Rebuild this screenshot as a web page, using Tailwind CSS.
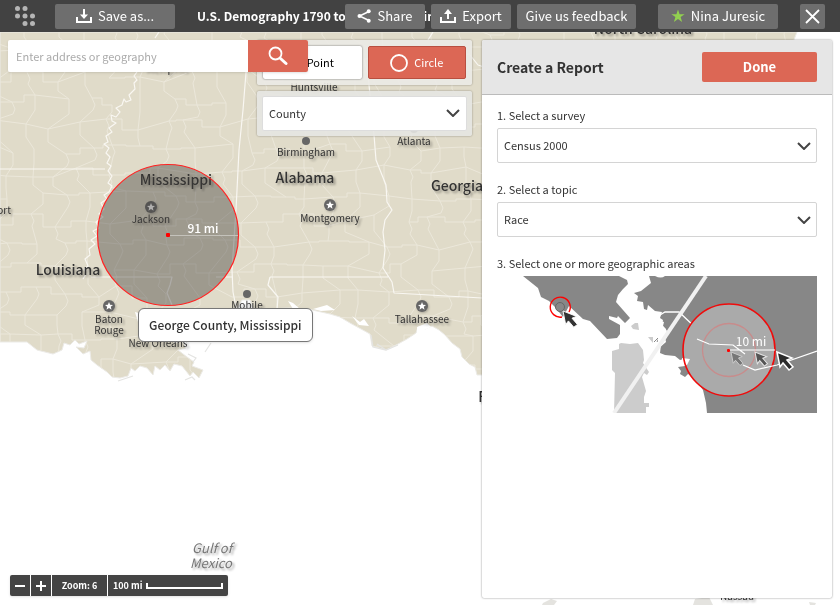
<!DOCTYPE html>
<html lang="en">
<head>
<meta charset="utf-8">
<title>U.S. Demography – Create a Report</title>
<script src="https://cdn.jsdelivr.net/npm/@tailwindcss/browser@4"></script>
</head>
<body class="flex min-h-screen flex-col bg-white font-['Noto_Sans_CJK_SC','Noto_Sans',sans-serif] text-[11px] text-[#333]">

<header class="relative z-20 flex h-8 items-center bg-[#424242] pr-[15px] pl-[15px] text-[13px] text-white">
  <button type="button" aria-label="Menu" class="w-5 shrink-0">
    <svg viewBox="0 0 20 20" class="h-5 w-5" fill="#b5b5b5"><circle cx="2.500" cy="2.500" r="2.500"/><circle cx="10" cy="2.500" r="2.500"/><circle cx="2.500" cy="10" r="2.500"/><circle cx="10" cy="10" r="2.500"/><circle cx="17.500" cy="10" r="2.500"/><circle cx="10" cy="17.500" r="2.500"/><circle cx="17.500" cy="17.500" r="2.500"/></svg>
  </button>
  <button type="button" class="ml-5 flex h-[25px] w-[120px] shrink-0 items-center justify-center gap-1.5 rounded-xs bg-[#6e6e6e]">
    <svg viewBox="0 0 16 15" class="h-[15px] w-4" fill="none" stroke="#fff" stroke-width="2"><path d="M1 8v5h14V8"/><path d="M8 0v8"/><path d="M4 5.500h8L8 10z" fill="#fff" stroke="none"/></svg>
    Save as...
  </button>
  <h1 class="ml-[22px] w-0 min-w-0 flex-1 text-[12px] font-bold whitespace-nowrap">U.S. Demography 1790 to Present – Main</h1>
  <nav class="relative flex shrink-0 items-center gap-1.5">
    <button type="button" class="flex h-[25px] w-20 items-center justify-center gap-1.5 rounded-xs bg-[#6e6e6e]">
      <svg viewBox="0 0 14 14" class="h-3.5 w-3.5" fill="#fff" stroke="#fff"><path d="M12 2.500 2.500 7 12 11.500" fill="none" stroke-width="1.500"/><circle cx="2.500" cy="7" r="2" stroke="none"/><circle cx="11.700" cy="2.300" r="2" stroke="none"/><circle cx="11.700" cy="11.700" r="2" stroke="none"/></svg>
      Share
    </button>
    <button type="button" class="flex h-[25px] w-20 items-center justify-center gap-1.5 rounded-xs bg-[#6e6e6e]">
      <svg viewBox="0 0 16 15" class="h-[15px] w-4 shrink-0" fill="none" stroke="#fff" stroke-width="2"><path d="M1 8v5h14V8"/><path d="M8 3v7"/><path d="M4 5h8L8 0z" fill="#fff" stroke="none"/></svg>
      Export
    </button>
    <button type="button" class="h-[25px] w-[119px] rounded-xs bg-[#6e6e6e] whitespace-nowrap">Give us feedback</button>
    <button type="button" class="ml-4 flex h-[25px] w-[120px] items-center justify-center gap-1.5 rounded-xs bg-[#6e6e6e] whitespace-nowrap">
      <svg viewBox="0 0 14 14" class="h-3.5 w-3.5" fill="#92d050"><path d="M7 .5 8.600 5.200h5L9.600 8.100l1.500 4.900L7 10.100 2.900 13l1.500-4.900L.4 5.200h5z"/></svg>
      Nina Juresic
    </button>
    <button type="button" aria-label="Close" class="ml-4 flex h-[25px] w-[25px] items-center justify-center rounded-xs bg-[#6e6e6e]">
      <svg viewBox="0 0 15 15" class="h-[15px] w-[15px]" stroke="#fff" stroke-width="1.800"><path d="m1 1 13 13M14 1 1 14"/></svg>
    </button>
  </nav>
</header>

<main class="relative flex flex-1 justify-end gap-2.5 overflow-hidden px-2 pt-2 pb-[7px]">

  <svg viewBox="0 32 840 573" preserveAspectRatio="xMinYMin slice" class="absolute inset-0 h-full w-full" role="img" aria-label="Map of the Gulf coast">
    <defs>
      <clipPath id="land"><path id="coast" d="M0 32H797L792 45H600V375H477L475 367 469 364 462 357 460 349 452 343 445 335 439 330 432 326 425 329 418 327 416 333 407 339 398 344 386 350 372 346 370 334 361 329 350 323 340 317 330 314 308 309 290 308 262 309 256 315 250 300 242 300 235 312 200 318 184 330 174 343 182 341 186 348 178 350 187 357 194 362 192 366 203 370 199 378 193 372 190 376 182 366 174 364 170 371 165 365 160 370 155 366 153 375 147 368 140 366 135 371 131 368 128 376 120 378 112 377 107 372 97 365 91 360 90 351 83 354 76 347 84 348 87 341 79 344 75 340 70 345 64 343 62 350 53 354 37 350 27 342H0Z"/></clipPath>
    </defs>
    <use href="#coast" fill="#e0dbc9" stroke="#ecebe7" stroke-width="1"/>
    <g clip-path="url(#land)" fill="none" stroke-linejoin="round">
      <path id="counties" stroke="#ebe7da" stroke-width="1"/>
      <g stroke="#f9f7f2" stroke-width="1.200">
        <path d="M247 60 243 110 239 150 236 210 232 270 233 292 237 312M216 277h17"/>
        <path d="M0 169h105M91 277h81l-2 8-3 8 5 12"/>
        <path d="M155 38l4-6M137 72l-3 4 3 4-3 3 1 6-6 6 2 5-5 2-2-3-2 6-6 3 4 4-4 5-5-2 1 6 4 2-7 5 3 4-6 4 2 6-4 2 5 4-3 5 4 4-3 6 4 3-3 5 4 5-4 7 4 3-3 6-5 3 3 4-6 4 3 6-5 5 4 3-7 5 3 6-6 3 4 5-6 4 4 4-6 5 1 6-5 4 3 7-4 3 2 5-3 5"/>
        <path d="M368 75 374 135 376 160 386 185 387 202 392 210 385 220 383 232 385 250 383 268 392 282 394 293 482 298M270 277H388M270 277l-2 8 10 12-1 13"/>
        <path d="M433 32l-5 8M470 55l8 10 12 4M368 75l-4-16 106-5"/>
      </g>
    </g>
    <g fill="#fff"><path d="m288 301 5 8h7l-7-6zM313 309l14-4 8 5-14 1zM352 316l8 6 4-3 5 7-10-1zM417 333l14-6-4-4-10 4zM135 312l3 10 4-8z"/></g>
    <g fill="none" stroke="#e4e4e2" stroke-width="1.200"><path d="m371 335 2 12 13 3 12-5M118 381l15-5M185 380l7-3 3 3M377 344l9 6M188 354l8 4-3 4M205 352l6-9"/></g>
    <g fill="#e4e3df"><path d="m543 603 8-4 6 2-3 4h-12zM695 599l14-2 4 8h-20zM809 602l7 1-1 2h-5z"/></g>
    <g fill="#666"><circle cx="306" cy="141" r="4"/><circle cx="247" cy="294" r="4"/><circle cx="414" cy="129" r="4"/></g>
    <g class="drop-shadow-[1px_1px_1px_rgba(0,0,0,0.25)]"><g id="cap"><circle cx="151" cy="207" r="6" fill="#666"/><path d="m151 203 1.100 2.700 2.900.2-2.200 1.900.7 2.900-2.500-1.600-2.500 1.600.7-2.900-2.200-1.900 2.900-.2z" fill="#fff"/></g><use href="#cap" x="-42" y="99"/><use href="#cap" x="179" y="-2"/><use href="#cap" x="271" y="99"/></g>
    <g class="drop-shadow-[2px_2px_1px_rgba(0,0,0,0.35)]" text-anchor="middle" fill="#333" font-size="10">
      <g font-size="14" font-weight="500"><text x="176" y="185">Mississippi</text><text x="305" y="183">Alabama</text><text x="457" y="191">Georgia</text><text x="68" y="275">Louisiana</text><text x="643" y="34">North Carolina</text><text x="502" y="402">Florida</text></g>
      <text x="151" y="223">Jackson</text><text x="306" y="156">Birmingham</text><text x="414" y="145">Atlanta</text><text x="314" y="91">Huntsville</text><text x="330" y="222">Montgomery</text><text x="422" y="323">Tallahassee</text><text x="247" y="309">Mobile</text><text x="109" y="323">Baton</text><text x="109" y="334">Rouge</text><text x="158" y="347">New Orleans</text><text x="11" y="214" text-anchor="end">Shreveport</text><text x="166" y="72">Memphis</text><text x="737" y="600">Nassau</text>
      <g font-size="13" font-style="italic" fill="#777"><text x="212" y="553">Gulf of</text><text x="211" y="568">Mexico</text></g>
    </g>
    <circle cx="168" cy="235" r="70.500" fill="#3c3a38" fill-opacity=".4" stroke="#f22" stroke-width="1.200"/>
    <path d="M168 235.500h70" stroke="#c4c2bb" fill="none"/>
    <rect x="166" y="233" width="4" height="4" rx="1" fill="red"/>
    <text x="203" y="233" text-anchor="middle" font-size="12" font-weight="500" fill="#fff">91 mi</text>
  </svg>

  <div class="absolute top-[276px] left-[138px] rounded-md border border-[#777] bg-white px-2.5 py-[7px] text-[12px] leading-[18px] font-medium whitespace-nowrap shadow-sm">George County, Mississippi</div>

  <form class="absolute top-2 left-2 z-10 flex h-8 w-[300px] rounded-xs shadow-sm">
    <input type="text" aria-label="Address or geography" placeholder="Enter address or geography" class="w-0 min-w-0 flex-1 rounded-l-xs bg-white px-2 outline-none placeholder:text-[#aaa]">
    <button type="button" aria-label="Search" class="flex w-[60px] items-center justify-center rounded-r-xs bg-[#dc6755]">
      <svg viewBox="0 0 20 20" class="h-5 w-5" fill="none" stroke="#fff" stroke-linecap="round"><circle cx="7.500" cy="7.500" r="6" stroke-width="1.800"/><path d="m12.500 12.500 5.500 5" stroke-width="3"/></svg>
    </button>
  </form>

  <section class="relative flex w-[215px] flex-col gap-1.5" aria-label="Selection tools">
    <div class="grid h-[45px] grid-cols-2 gap-1.5 rounded-xs bg-[#ebeae6]/90 p-1.5 shadow-[0_0_2px_rgba(0,0,0,0.4)]">
      <button type="button" class="rounded-xs bg-white pl-4 text-black shadow-[0_0_2px_rgba(0,0,0,0.6)]">Point</button>
      <button type="button" class="flex items-center justify-center gap-1.5 rounded-xs border border-[#b84f40] bg-[#dc6755] text-white">
        <svg viewBox="0 0 18 18" class="h-[18px] w-[18px]" fill="none" stroke="#fff" stroke-width="1.800"><circle cx="9" cy="9" r="8"/></svg>
        Circle
      </button>
    </div>
    <div class="relative h-[45px] rounded-xs bg-[#e6e5e2]/90 p-[5px] shadow-[0_0_2px_rgba(0,0,0,0.4)]">
      <select aria-label="Geography level" class="h-full w-full appearance-none rounded-xs border border-[#ddd] bg-white px-1.5 text-[#333]"><option>County</option></select>
      <svg viewBox="0 0 14 8" class="pointer-events-none absolute top-[18px] right-3 h-2 w-3.5" fill="none" stroke="#444" stroke-width="2"><path d="m1 1 6 6 6-6"/></svg>
    </div>
  </section>

  <aside class="relative flex w-[350px] flex-col rounded-xs bg-white shadow-[0_0_2px_rgba(0,0,0,0.5)]">
    <div class="flex h-[55px] items-center justify-between rounded-t-xs border-b border-[#bbb] bg-[#e6e6e6] px-[15px]">
      <h2 class="text-[14px] font-bold">Create a Report</h2>
      <button type="button" class="h-[30px] w-[115px] rounded-xs bg-[#dc6755] text-[13px] font-bold text-white">Done</button>
    </div>
    <div class="flex flex-col px-[15px] pt-3">
      <label for="survey" class="leading-4">1. Select a survey</label>
      <div class="relative mt-[5px]">
        <select id="survey" class="h-[35px] w-full appearance-none rounded-xs border border-[#d4d4d4] bg-white px-1.5 text-[#333]"><option>Census 2000</option></select>
        <svg viewBox="0 0 14 8" class="pointer-events-none absolute top-[14px] right-1.5 h-2 w-3.5" fill="none" stroke="#444" stroke-width="2"><path d="m1 1 6 6 6-6"/></svg>
      </div>
      <label for="topic" class="mt-[18px] leading-4">2. Select a topic</label>
      <div class="relative mt-[5px]">
        <select id="topic" class="h-[35px] w-full appearance-none rounded-xs border border-[#d4d4d4] bg-white px-1.5 text-[#333]"><option>Race</option></select>
        <svg viewBox="0 0 14 8" class="pointer-events-none absolute top-[14px] right-1.5 h-2 w-3.5" fill="none" stroke="#444" stroke-width="2"><path d="m1 1 6 6 6-6"/></svg>
      </div>
      <p class="mt-[18px] leading-4">3. Select one or more geographic areas</p>
      <svg viewBox="0 0 320 137" class="mt-[5px] w-full" role="img" aria-label="Drag outwards from a point to draw a circle">
        <g fill="#878787">
          <path d="M26 0 41 12 44 21 52 25 58 31 66 41 72 30 86 43 93 45 110 63 120 62 123 58V49L112 43V40L120 42 121 40 128 47 133 42 119 26 121 19 126 13 131 8 130 4 122 0Z"/>
          <path d="M152 0 154 7 149 11 144 15 137 17 141 20 140 25 146 26 147 33 150 34 151 29 158 35 165 36 163 42 166 44 165 49 169 53 170 61 164 69 163 77 168 79 178 80 183 84 194 81 193 87 188 90 181 91 184 95 183 98 188 101 191 98 196 101 206 114 209 127 210 137H320V0Z"/>
        </g>
        <path d="M158 0q6 3 10 0z" fill="#fff"/>
        <path d="M122 68l2-1 9 1 8-1 5 7 1 10-1 3 6 9-2 3-3-2-2 4 4 14-2 6v6h5v4h-3v6h-32l1-40-3-3V75l7-2zM134 50l4-3h3l1 7-6-1zM151 61h5v6z" fill="#ccc"/>
        <path d="m157 66 6-6-3 6" stroke="#888" fill="none"/>
        <path d="m163 39 5-3h14l18 17" fill="none" stroke="#fff" stroke-width="1.300"/>
        <path d="M161 44l6 2-1 4 4 5-2 6 1 5-8 7z" fill="#fff"/>
        <path d="m117 137 92-137" stroke="#f1f1f1" stroke-width="4"/>
        <circle cx="232" cy="74" r="46" fill="#aaa"/>
        <path d="m185 82 8 1-3 6-5-1z" fill="#fff"/>
        <circle cx="232" cy="74" r="46" fill="none" stroke="#f00b0b" stroke-width="1.600"/>
        <circle cx="232" cy="74" r="26.500" fill="none" stroke="#c88c8c" stroke-width="1.300"/>
        <path d="m200 63 12 5 24 1 12 9M246 89l12 5 22-5 40-14M232 74h46" fill="none" stroke="#fff" stroke-width="1.200"/>
        <rect x="230" y="73" width="3" height="3" rx="1" fill="red"/>
        <text x="254" y="70" text-anchor="middle" font-size="12" fill="#fff">10 mi</text>
        <path d="M72 36a10 10 0 1 0-7 5" fill="none" stroke="red" stroke-width="1.400"/>
        <circle cx="63" cy="31" r="4.500" fill="#888" stroke="#666"/>
        <defs><path id="cursor" d="m0 0 3 15 3-4 6 7 4-3-6-7 5-2z"/></defs>
        <use href="#cursor" transform="translate(66 35) scale(.9)" fill="#333" stroke="#fff" stroke-width="1"/>
        <use href="#cursor" transform="translate(234 76) scale(.75)" fill="#777" stroke="#ccc" stroke-width="1.300"/>
        <use href="#cursor" transform="translate(258 76) scale(.78)" fill="#555" stroke="#e5e5e5" stroke-width="1.300"/>
        <use href="#cursor" x="280" y="76" fill="#2b2b2b" stroke="#fff" stroke-width="1.500"/>
      </svg>
    </div>
  </aside>

  <div class="absolute bottom-[9px] left-2.5 flex h-[21px] w-[218px] divide-x divide-white rounded-xs bg-[#444] text-[9px] font-bold text-white shadow-sm">
    <button type="button" aria-label="Zoom out" class="flex w-[21px] items-center justify-center"><svg viewBox="0 0 10 10" class="h-2.5 w-2.5" stroke="#fff" stroke-width="2"><path d="M0 5h10"/></svg></button>
    <button type="button" aria-label="Zoom in" class="flex w-[21px] items-center justify-center"><svg viewBox="0 0 10 10" class="h-2.5 w-2.5" stroke="#fff" stroke-width="2"><path d="M0 5h10M5 0v10"/></svg></button>
    <span class="flex w-14 items-center justify-center">Zoom: 6</span>
    <span class="flex flex-1 items-center justify-between px-[5px] whitespace-nowrap">100 mi <svg viewBox="0 0 77 6" class="h-1.5 w-[77px]" fill="none" stroke="#fff" stroke-width="2"><path d="M1 0v5h75V0"/></svg></span>
  </div>
</main>

<script>
  // County boundaries: a staggered grid whose corners are displaced by a repeatable hash.
  const noise = (a, b) => { const s = Math.sin(a * 127.1 + b * 311.7) * 43758.5453; return s - Math.floor(s); };
  const cw = 27, ch = 24;
  const point = (i, j) => [Math.round(i * cw + (j % 2) * 11 + (noise(i, j) - 0.5) * 15), Math.round(28 + j * ch + (noise(j + 9, i + 4) - 0.5) * 14)];
  let d = '';
  for (let j = 0; j < 16; j++) for (let i = -1; i < 31; i++) {
    const [x, y] = point(i, j), [rx, ry] = point(i + 1, j), [bx, by] = point(i, j + 1);
    const k = noise(i + 3, j * 2);
    if (k < 0.9) d += k < 0.5 ? `M${x} ${y}H${Math.round((x + rx) / 2)}V${ry}H${rx}` : `M${x} ${y}L${rx} ${ry}`;
    if (k > 0.08) d += k > 0.5 ? `M${x} ${y}V${Math.round((y + by) / 2)}L${bx} ${by}` : `M${x} ${y}l3 7-2 5L${bx} ${by}`;
  }
  document.getElementById('counties').setAttribute('d', d);
</script>
</body>
</html>
